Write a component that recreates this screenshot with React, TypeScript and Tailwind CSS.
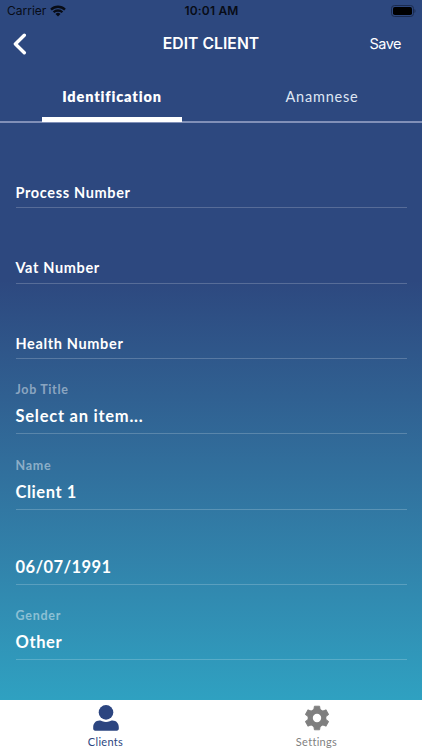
import * as React from 'react';

type Field = {
    id: string;
    label?: string;
    value: string;
    placeholder?: boolean;
    tracking: string;
    labelTracking?: string;
};

const fields: Field[] = [
    { id: 'process', value: 'Process Number', placeholder: true, tracking: 'tracking-[0.65px]' },
    { id: 'vat', value: 'Vat Number', placeholder: true, tracking: 'tracking-[0.65px]' },
    { id: 'health', value: 'Health Number', placeholder: true, tracking: 'tracking-[0.65px]' },
    { id: 'job', label: 'Job Title', value: 'Select an item...', tracking: 'tracking-[0.75px]', labelTracking: 'tracking-[0.65px]' },
    { id: 'name', label: 'Name', value: 'Client 1', tracking: 'tracking-[0.55px]', labelTracking: 'tracking-[0.7px]' },
    { id: 'birth', value: '06/07/1991', tracking: 'tracking-[0.4px]' },
    { id: 'gender', label: 'Gender', value: 'Other', tracking: 'tracking-[0.6px]', labelTracking: 'tracking-[0.75px]' },
];

function StatusBar() {
    return (
        <div className="grid h-[22px] grid-cols-3 items-center pl-[7px] pr-[6px] text-[#080c16]">
            <div className="flex items-center gap-[4px]">
                <span className="text-[12px] tracking-[0px]">Carrier</span>
                <svg width="16" height="12" viewBox="0 0 16 12" fill="none" stroke="currentColor" strokeWidth="2.3">
                    <path d="M1 4.6a10 10 0 0 1 14 0" />
                    <path d="M3.6 7.3a6.3 6.3 0 0 1 8.8 0" />
                    <path d="M8 11.4 5.5 8.9a3.6 3.6 0 0 1 5 0z" fill="currentColor" stroke="none" />
                </svg>
            </div>
            <span className="text-center text-[12px] font-semibold tracking-[0.2px]">10:01 AM</span>
            <svg className="justify-self-end" width="25" height="12" viewBox="0 0 25 12">
                <rect x="0.5" y="0.5" width="22" height="11" rx="3" fill="none" stroke="#1b2b4f" />
                <rect x="2" y="2" width="19" height="8" rx="1.8" fill="#000" />
                <path d="M23.5 4v4c1.3-.6 1.3-3.4 0-4z" fill="#1b2b4f" />
            </svg>
        </div>
    );
}

function Header() {
    return (
        <div className="grid h-[43px] grid-cols-3 items-center pl-[12px] pr-[21px] text-white">
            <svg width="15" height="22" viewBox="0 0 15 22" fill="none" stroke="currentColor" strokeWidth="3.4" strokeLinecap="round" strokeLinejoin="round">
                <path d="M12.3 2.2 3.4 11l8.9 8.8" />
            </svg>
            <span className="ml-[9px] whitespace-nowrap text-center text-[15.7px] font-semibold leading-[22px] tracking-[0.05px]">EDIT CLIENT</span>
            <span className="pt-px text-right text-[14.5px] tracking-[-0.5px]">Save</span>
        </div>
    );
}

function Tabs() {
    return (
        <div className="h-[58px] border-b-2 border-[#8190b8] font-[Lato,sans-serif] text-[14.5px] text-white">
            <div className="ml-[7px] grid h-[57px] w-[420px] grid-cols-2">
                <div className="flex w-[140px] items-center justify-center justify-self-center border-b-[5px] border-white pt-[11px] font-extrabold tracking-[0.85px]">
                    Identification
                </div>
                <div className="flex items-center justify-center pt-[6px] tracking-[0.8px] text-[#dfe6f3]">Anamnese</div>
            </div>
        </div>
    );
}

function FormField({ field }: { field: Field }) {
    return (
        <div className="flex h-[75.33px] flex-col justify-end border-b border-white/20 text-white">
            {field.label && (
                <span className={`text-[12.5px] font-bold leading-4 text-white/45 ${field.labelTracking}`}>{field.label}</span>
            )}
            <span
                className={`font-bold ${field.tracking} ${
                    field.placeholder ? 'pb-[4.4px] text-[14.5px] leading-5' : 'pb-[5px] pt-[6px] text-[16.5px] leading-6'
                }`}
            >
                {field.value}
            </span>
        </div>
    );
}

function ClientsIcon() {
    return (
        <svg width="26" height="26" viewBox="0 0 26 26" fill="currentColor">
            <circle cx="13" cy="7.4" r="7.3" />
            <path d="M6.5 15.6c1.3 0 2 .3 2.8.6 2.3.9 5.1.9 7.4 0 .8-.3 1.5-.6 2.8-.6 3.8 0 6.3 2.9 6.3 6.6v1.6c0 1.1-.8 1.9-1.9 1.9H2.1C1 25.700.2 24.900.2 23.800v-1.600c0-3.700 2.500-6.600 6.300-6.600z" />
        </svg>
    );
}

const teeth = [0, 60, 120, 180, 240, 300];

function SettingsIcon() {
    return (
        <svg width="26" height="26" viewBox="0 0 26 26" fill="none" stroke="currentColor">
            <circle cx="13" cy="13" r="6.8" strokeWidth="5.2" />
            {teeth.map((angle) => (
                <path
                    key={angle}
                    d="M9.700 5.500 10.400 1.200H15.600L16.300 5.500z"
                    transform={`rotate(${angle} 13 13)`}
                    fill="currentColor"
                    strokeWidth="0.9"
                    strokeLinejoin="round"
                />
            ))}
        </svg>
    );
}

function TabBar() {
    return (
        <div className="grid h-[50px] grid-cols-2 bg-white font-[Lato,sans-serif] text-[11px] leading-[14px]">
            <div className="flex flex-col items-center pt-[4.5px] text-[#2c4580]">
                <ClientsIcon />
                <span className="mt-[4.5px] tracking-[0.3px]">Clients</span>
            </div>
            <div className="flex flex-col items-center pt-[4.500px] text-[#7f7f7f]">
                <SettingsIcon />
                <span className="mt-[4.5px] tracking-[0.3px]">Settings</span>
            </div>
        </div>
    );
}

export default function App() {
    return (
        <div className="flex h-[750px] w-[422px] flex-col overflow-hidden bg-white font-[Inter,sans-serif]">
            <div className="flex h-[700px] flex-col bg-linear-to-b from-[#2d487f] from-40% to-[#2fa1c1]">
                <StatusBar />
                <Header />
                <Tabs />
                <div className="px-[15.5px] pt-[10px] font-[Lato,sans-serif]">
                    {fields.map((field) => (
                        <FormField key={field.id} field={field} />
                    ))}
                </div>
            </div>
            <TabBar />
        </div>
    );
}
